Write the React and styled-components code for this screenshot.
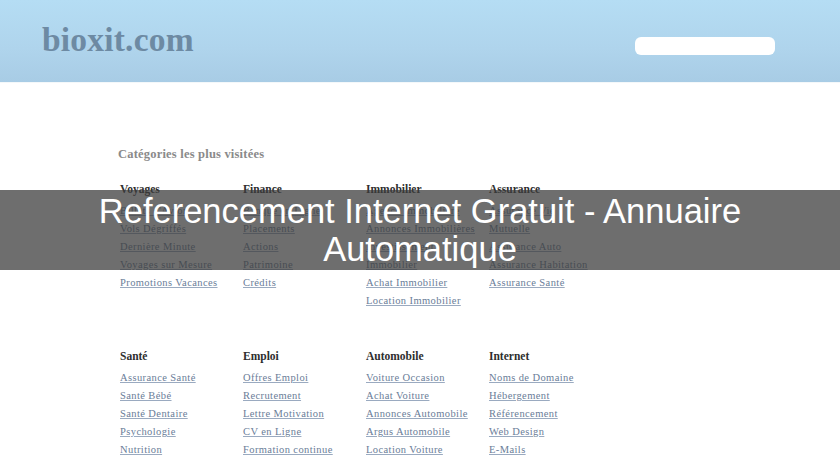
import React from "react";
import styled, { createGlobalStyle } from "styled-components";

const Global = createGlobalStyle`
  html, body { margin: 0; padding: 0; background: #fff; }
  body { width: 840px; height: 460px; overflow: hidden; position: relative; font-family: "Liberation Serif", "DejaVu Serif", serif; }
`;

const Header = styled.header`
  height: 83px;
  background: linear-gradient(to bottom, #b5ddf4 0%, #afd4ec 60%, #a8cce5 100%);
  display: flex;
  align-items: center;
  justify-content: space-between;
  padding: 0 65px 0 42px;
  box-sizing: border-box;
  border-bottom: 1px solid #f4f8fa;
`;

const Logo = styled.div`
  font-family: "Liberation Serif", serif;
  font-weight: bold;
  font-size: 33.5px;
  color: #6d8aa3;
  letter-spacing: 0.2px;
  margin-top: -2px;
`;

const Search = styled.input`
  width: 140px;
  height: 18px;
  border: none;
  border-radius: 6px;
  background: #fff;
  padding: 0;
  margin-top: 9px;
  outline: none;
`;

const Main = styled.main`
  padding: 62px 0 0 118px;
`;

const Title = styled.h2`
  margin: 0 0 17px;
  font-size: 12.5px;
  line-height: 18px;
  font-weight: bold;
  color: #8a8a8a;
  letter-spacing: 0.2px;
`;

const Grid = styled.div`
  display: grid;
  grid-template-columns: repeat(4, 123px);
  row-gap: 37px;
  padding-left: 2px;
`;

const Column = styled.section`
  width: 112px;
`;

const Heading = styled.h3`
  margin: 0 0 4px;
  font-size: 11.5px;
  line-height: 18px;
  font-weight: bold;
  color: #2e2e2e;
`;

const List = styled.ul`
  list-style: none;
  margin: 0;
  padding: 0;
`;

const Item = styled.li`
  font-size: 10.5px;
  line-height: 18px;
  letter-spacing: 0.4px;
`;

const Link = styled.a`
  color: #6a7d98;
  text-decoration: underline;
  text-decoration-color: #9aaac0;
`;

const Overlay = styled.div`
  position: absolute;
  left: 0;
  top: 190px;
  width: 840px;
  height: 80px;
  background: rgba(60, 60, 60, 0.74);
  display: flex;
  align-items: center;
  justify-content: center;
  text-align: center;
  color: #fff;
  font-family: "Liberation Sans", Arial, sans-serif;
  font-size: 34.5px;
  line-height: 38px;
  padding: 0 40px;
  box-sizing: border-box;
`;

const data = [
  { t: "Voyages", l: ["Billets d'Avion", "Vols Dégriffés", "Dernière Minute", "Voyages sur Mesure", "Promotions Vacances"] },
  { t: "Finance", l: ["Banque en Ligne", "Placements", "Actions", "Patrimoine", "Crédits"] },
  { t: "Immobilier", l: ["Agence Immobilière", "Annonces Immobilières", "Investissement Immobilier", "Achat Immobilier", "Location Immobilier"] },
  { t: "Assurance", l: ["Assurance Vie", "Mutuelle", "Assurance Auto", "Assurance Habitation", "Assurance Santé"] },
  { t: "Santé", l: ["Assurance Santé", "Santé Bébé", "Santé Dentaire", "Psychologie", "Nutrition"] },
  { t: "Emploi", l: ["Offres Emploi", "Recrutement", "Lettre Motivation", "CV en Ligne", "Formation continue"] },
  { t: "Automobile", l: ["Voiture Occasion", "Achat Voiture", "Annonces Automobile", "Argus Automobile", "Location Voiture"] },
  { t: "Internet", l: ["Noms de Domaine", "Hébergement", "Référencement", "Web Design", "E-Mails"] },
];

export default function App() {
  return (
    <>
      <Global />
      <Header>
        <Logo>bioxit.com</Logo>
        <Search type="text" aria-label="Recherche" />
      </Header>
      <Main>
        <Title>Catégories les plus visitées</Title>
        <Grid>
          {data.map((c) => (
            <Column key={c.t}>
              <Heading>{c.t}</Heading>
              <List>
                {c.l.map((x) => (
                  <Item key={x}>
                    <Link href="#">{x}</Link>
                  </Item>
                ))}
              </List>
            </Column>
          ))}
        </Grid>
      </Main>
      <Overlay>Referencement Internet Gratuit - Annuaire Automatique</Overlay>
    </>
  );
}
